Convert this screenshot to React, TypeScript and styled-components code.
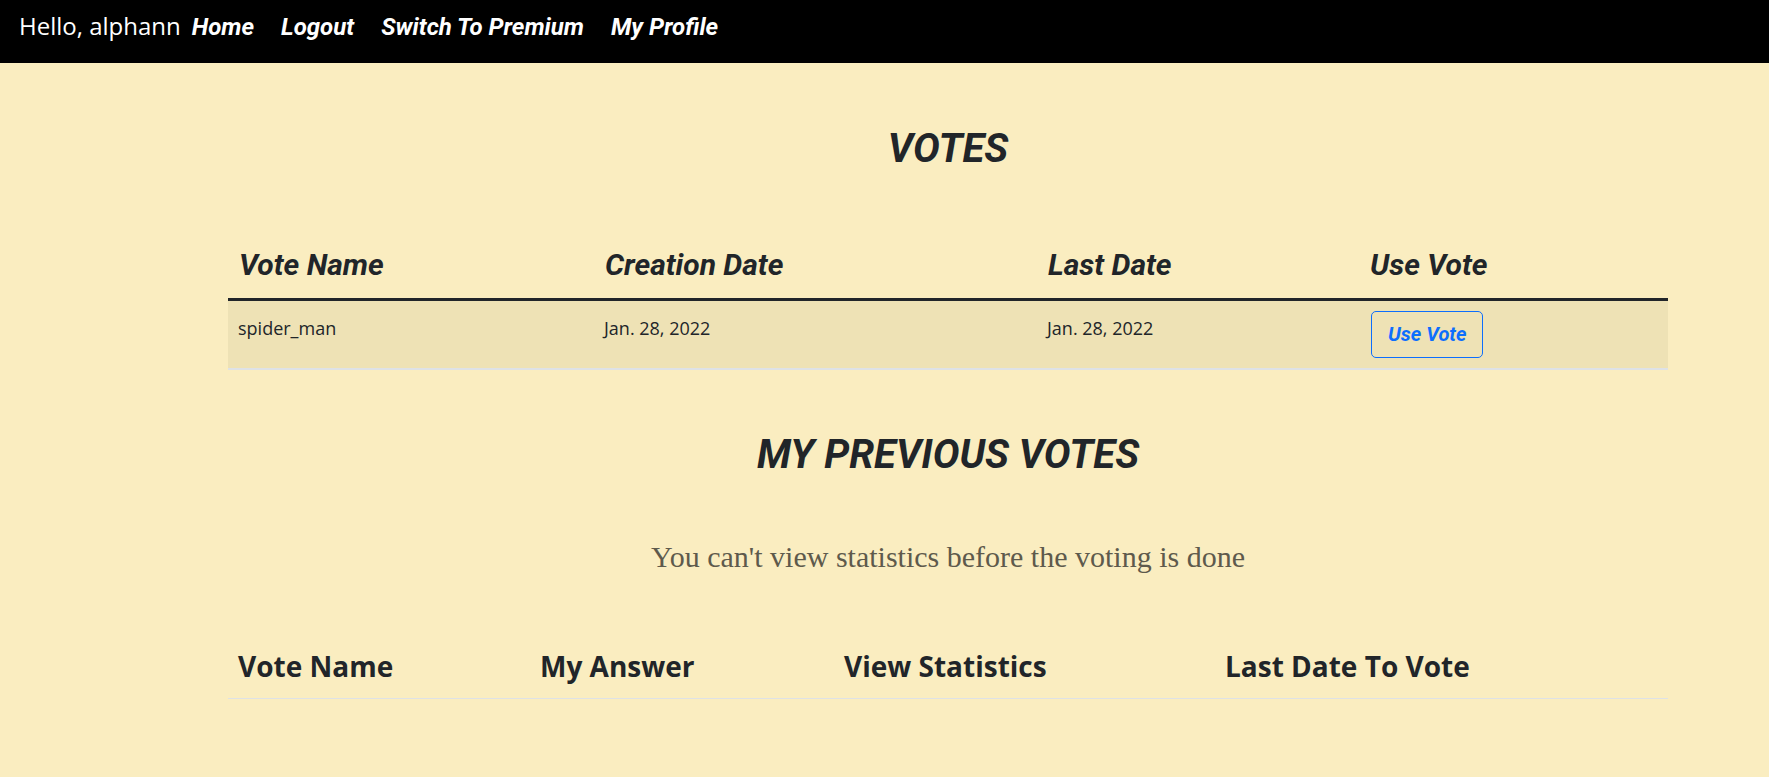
import React from 'react';
import styled, { createGlobalStyle } from 'styled-components';

const GlobalStyle = createGlobalStyle`
  body {
    margin: 0;
    background: #faedc0;
    font-family: "Open Sans", "Noto Sans", sans-serif;
    color: #212529;
  }
`;

const NavBar = styled.nav`
  box-sizing: border-box;
  height: 63px;
  background: #000;
  display: flex;
  align-items: baseline;
  padding: 9px 0 0 19px;
`;

const Greeting = styled.span`
  color: #fff;
  font-family: "Open Sans", sans-serif;
  font-size: 24px;
  margin-right: 11px;
`;

const NavLinks = styled.div`
  display: flex;
  align-items: baseline;
  gap: 27px;
`;

const NavLink = styled.a`
  color: #fff;
  font-family: Roboto, sans-serif;
  font-weight: 700;
  font-style: italic;
  font-size: 24px;
  text-decoration: none;
`;

const Content = styled.main`
  width: 1440px;
  margin-left: 228px;
  padding-top: 62px;
`;

const SectionTitle = styled.h1`
  margin: 0;
  text-align: center;
  font-family: Roboto, sans-serif;
  font-weight: 700;
  font-style: italic;
  font-size: 40px;
  line-height: 48px;
  color: #212529;
`;

const Table = styled.table`
  width: 100%;
  border-collapse: collapse;
  table-layout: fixed;

  th,
  td {
    box-sizing: border-box;
  }
`;

const VotesTable = styled(Table)`
  margin-top: 67px;
`;

const HeadCell = styled.th<{ w: number }>`
  width: ${p => p.w}px;
  text-align: left;
  padding: 8px 12px 16px 11px;
  font-family: Roboto, sans-serif;
  font-weight: 700;
  font-style: italic;
  font-size: 30px;
  line-height: 33.6px;
  border-bottom: 3px solid #212529;
`;

const DataRow = styled.tr`
  background: #eee2b5;
  border-bottom: 2px solid #dee2e6;
`;

const DataCell = styled.td`
  vertical-align: top;
  padding: 10px 12px 10px 10px;
  font-size: 18px;
  line-height: 34px;
  color: #212529;
`;

const ButtonCell = styled(DataCell)`
  padding-left: 12px;
`;

const OutlineButton = styled.button`
  height: 47px;
  padding: 0 16px;
  border: 1px solid #0d6efd;
  border-radius: 5px;
  background: transparent;
  color: #0d6efd;
  font-family: Roboto, sans-serif;
  font-weight: 700;
  font-style: italic;
  font-size: 20px;
  cursor: pointer;
`;

const PreviousTitle = styled(SectionTitle)`
  margin-top: 61px;
`;

const Notice = styled.p`
  margin: 60px 0 0;
  text-align: center;
  font-family: "Liberation Serif", "Times New Roman", serif;
  font-size: 30px;
  line-height: 36px;
  color: #5e5a4c;
`;

const HistoryTable = styled(Table)`
  margin-top: 67px;
`;

const HistoryHead = styled.th<{ w: number }>`
  width: ${p => p.w}px;
  text-align: left;
  padding: 8px 10px 15px;
  font-family: "Open Sans", sans-serif;
  font-weight: 700;
  font-size: 28px;
  line-height: 33.6px;
  border-bottom: 1px solid #dee2e6;
`;

const votes = [
  { name: 'spider_man', created: 'Jan. 28, 2022', last: 'Jan. 28, 2022' },
];

const App: React.FC = () => {
  return (
    <>
      <GlobalStyle />
      <NavBar>
        <Greeting>Hello, alphann</Greeting>
        <NavLinks>
          <NavLink href="#">Home</NavLink>
          <NavLink href="#">Logout</NavLink>
          <NavLink href="#">Switch To Premium</NavLink>
          <NavLink href="#">My Profile</NavLink>
        </NavLinks>
      </NavBar>

      <Content>
        <SectionTitle>VOTES</SectionTitle>

        <VotesTable>
          <thead>
            <tr>
              <HeadCell w={366}>Vote Name</HeadCell>
              <HeadCell w={443}>Creation Date</HeadCell>
              <HeadCell w={322}>Last Date</HeadCell>
              <HeadCell w={309}>Use Vote</HeadCell>
            </tr>
          </thead>
          <tbody>
            {votes.map(v => (
              <DataRow key={v.name}>
                <DataCell>{v.name}</DataCell>
                <DataCell>{v.created}</DataCell>
                <DataCell>{v.last}</DataCell>
                <ButtonCell>
                  <OutlineButton>Use Vote</OutlineButton>
                </ButtonCell>
              </DataRow>
            ))}
          </tbody>
        </VotesTable>

        <PreviousTitle>MY PREVIOUS VOTES</PreviousTitle>
        <Notice>You can't view statistics before the voting is done</Notice>

        <HistoryTable>
          <thead>
            <tr>
              <HistoryHead w={302}>Vote Name</HistoryHead>
              <HistoryHead w={304}>My Answer</HistoryHead>
              <HistoryHead w={381}>View Statistics</HistoryHead>
              <HistoryHead w={453}>Last Date To Vote</HistoryHead>
            </tr>
          </thead>
        </HistoryTable>
      </Content>
    </>
  );
};

export default App;
